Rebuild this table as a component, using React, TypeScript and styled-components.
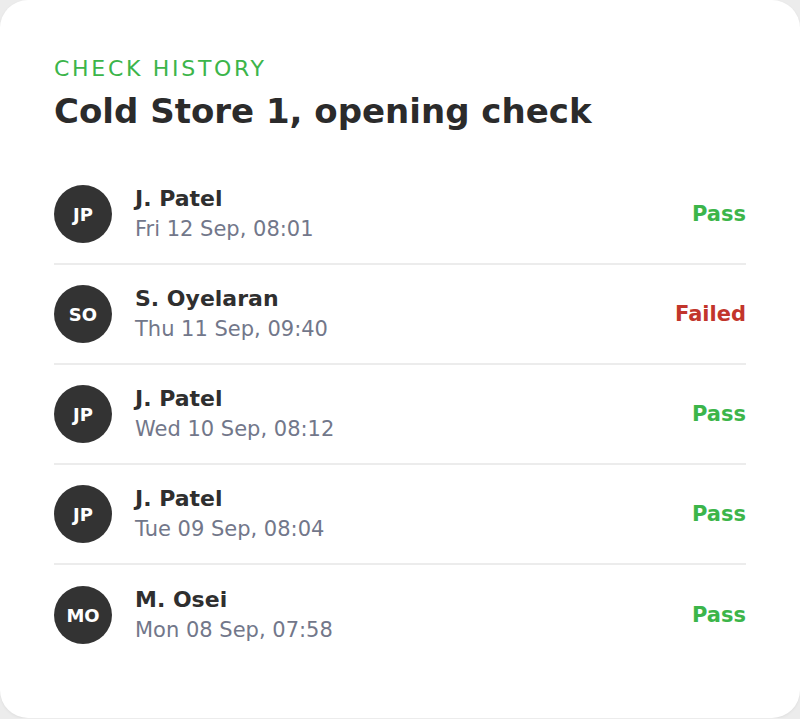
import styled, { createGlobalStyle } from 'styled-components';

const GlobalStyle = createGlobalStyle`
  html, body {
    margin: 0;
    padding: 0;
    background: #ececec;
  }
  body {
    font-family: "DejaVu Sans", "Noto Sans", sans-serif;
  }
`;

type Status = 'pass' | 'failed';

interface Check {
  initials: string;
  name: string;
  when: string;
  status: Status;
}

const checks: Check[] = [
  { initials: 'JP', name: 'J. Patel', when: 'Fri 12 Sep, 08:01', status: 'pass' },
  { initials: 'SO', name: 'S. Oyelaran', when: 'Thu 11 Sep, 09:40', status: 'failed' },
  { initials: 'JP', name: 'J. Patel', when: 'Wed 10 Sep, 08:12', status: 'pass' },
  { initials: 'JP', name: 'J. Patel', when: 'Tue 09 Sep, 08:04', status: 'pass' },
  { initials: 'MO', name: 'M. Osei', when: 'Mon 08 Sep, 07:58', status: 'pass' },
];

const Card = styled.section`
  box-sizing: border-box;
  width: 800px;
  height: 718px;
  background: #ffffff;
  border-radius: 28px;
  padding: 55px 54px 0;
  box-shadow: 0 1px 3px rgba(0, 0, 0, 0.06);
`;

const Eyebrow = styled.div`
  font-size: 22px;
  line-height: 28px;
  letter-spacing: 2.7px;
  color: #3cb54a;
`;

const Title = styled.h1`
  margin: 6px 0 0;
  font-size: 34px;
  line-height: 44px;
  font-weight: 700;
  color: #2b2b2b;
`;

const List = styled.ul`
  list-style: none;
  margin: 32px 0 0;
  padding: 0;
`;

const Row = styled.li`
  display: flex;
  align-items: center;
  height: 100px;
  box-sizing: border-box;
  gap: 23px;
  border-bottom: 2px solid #ececec;

  &:last-child {
    border-bottom: none;
  }
`;

const Avatar = styled.div`
  flex: none;
  width: 58px;
  height: 58px;
  border-radius: 50%;
  background: #333333;
  color: #ffffff;
  font-size: 18px;
  font-weight: 700;
  display: flex;
  align-items: center;
  justify-content: center;
`;

const Info = styled.div`
  flex: 1;
  display: flex;
  flex-direction: column;
  gap: 4px;
`;

const Name = styled.div`
  font-size: 22px;
  line-height: 27px;
  font-weight: 600;
  color: #2f2f2f;
`;

const When = styled.div`
  font-size: 21px;
  line-height: 27px;
  color: #72778a;
`;

const StatusText = styled.div<{ $status: Status }>`
  font-size: 21px;
  font-weight: 600;
  color: ${(p) => (p.$status === 'pass' ? '#3cb54a' : '#c2352b')};
`;

export default function App() {
  return (
    <>
      <GlobalStyle />
      <Card>
        <Eyebrow>CHECK HISTORY</Eyebrow>
        <Title>Cold Store 1, opening check</Title>
        <List>
          {checks.map((c, i) => (
            <Row key={i}>
              <Avatar>{c.initials}</Avatar>
              <Info>
                <Name>{c.name}</Name>
                <When>{c.when}</When>
              </Info>
              <StatusText $status={c.status}>{c.status === 'pass' ? 'Pass' : 'Failed'}</StatusText>
            </Row>
          ))}
        </List>
      </Card>
    </>
  );
}
